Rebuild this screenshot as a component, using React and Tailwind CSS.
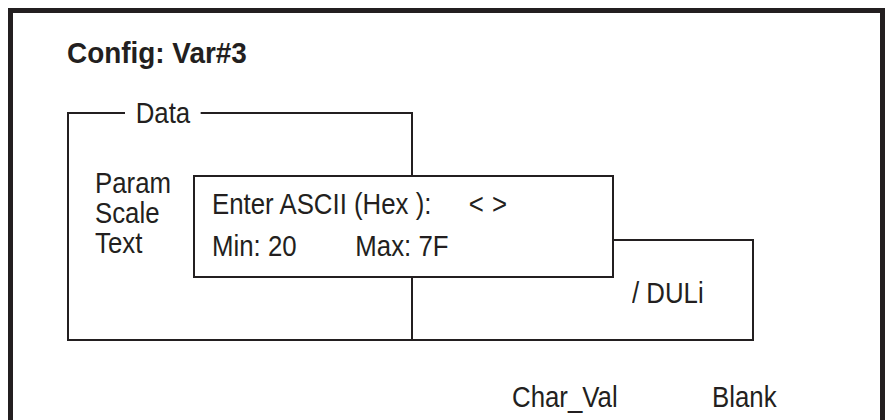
export default function App() {
  return (
    <div className="w-[885px] h-[420px] overflow-hidden bg-white text-[#231f20] font-['Liberation_Sans',Arial,sans-serif]">
      {/* outer frame, bottom edge runs off the page */}
      <div className="ml-[8px] mt-[8px] w-[877px] h-[440px] border-[5px] border-[#231f20]">
        <h1 className="pl-[54px] pt-[24px] text-[30px] leading-[32px] font-bold">
          <span className="inline-block origin-left scale-x-[0.93]">Config: Var#3</span>
        </h1>

        {/* Data group */}
        <div className="relative ml-[54px] mt-[43px] w-[346px] h-[229px] border-2 border-[#231f20]">
          <span className="absolute left-[56px] -top-[16px] origin-left scale-x-[0.89] bg-white px-[12px] text-[29px] leading-[30px]">
            Data
          </span>
          <div className="pl-[26px] pt-[54px] text-[29px] leading-[30px]">
            <div className="origin-left scale-x-[0.89]">Param</div>
            <div className="origin-left scale-x-[0.89]">Scale</div>
            <div className="origin-left scale-x-[0.89]">Text</div>
          </div>

          {/* DULi box behind the dialog */}
          <div className="absolute left-[342px] top-[125px] w-[343px] h-[102px] border-2 border-[#231f20] pl-[219px] pt-[37px] text-[29px] leading-[30px]">
            <span className="inline-block origin-left scale-x-[0.89]">/ DULi</span>
          </div>

          {/* entry dialog */}
          <div className="absolute z-10 left-[124px] top-[61px] w-[421px] h-[103px] border-2 border-[#231f20] bg-white pl-[17px] pt-[6px] text-[29px] leading-[42px]">
            <div className="flex origin-left scale-x-[0.89]">
              <span>Enter ASCII (Hex ):</span>
              <span className="ml-[42px]">&lt;</span>
              <span className="ml-[9px]">&gt;</span>
            </div>
            <div className="flex origin-left scale-x-[0.89]">
              <span className="w-[161px]">Min: 20</span>
              <span>Max: 7F</span>
            </div>
          </div>
        </div>

        <div className="flex pl-[499px] mt-[41px] text-[29px] leading-[30px]">
          <span className="w-[200px] origin-left scale-x-[0.89]">Char_Val</span>
          <span className="origin-left scale-x-[0.89]">Blank</span>
        </div>
      </div>
    </div>
  );
}
